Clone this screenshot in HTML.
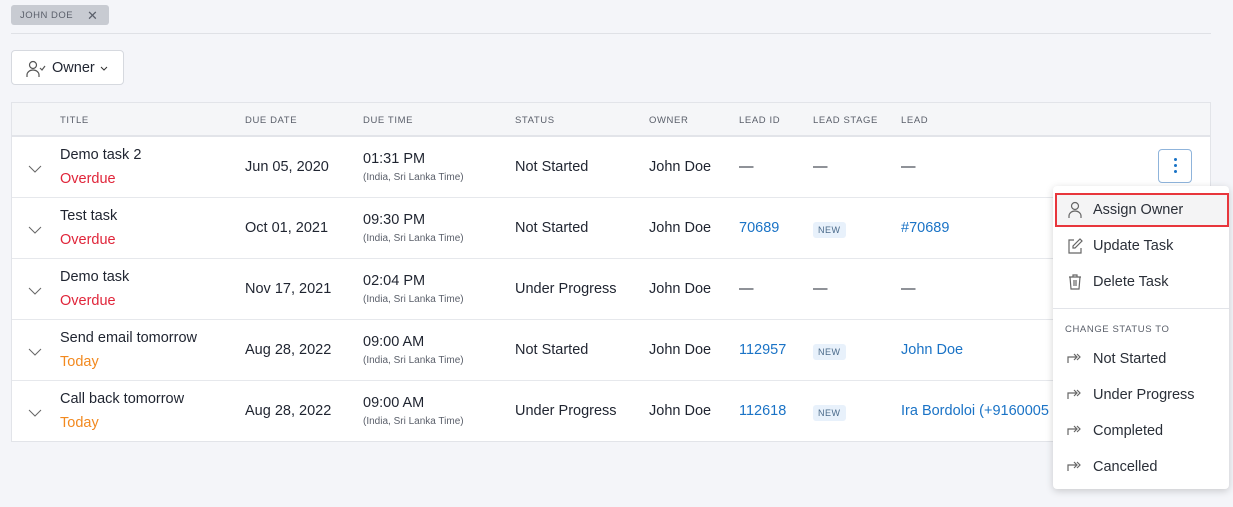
<!DOCTYPE html><html><head><style>
body{margin:0;width:1233px;height:507px;background:#f4f5f9;font-family:"Liberation Sans",sans-serif;position:relative;overflow:hidden;color:#1f2430}
.a{position:absolute;white-space:nowrap}
.chip{left:11px;top:5px;width:98px;height:20px;background:#c8cbd2;border-radius:3px;font-size:9.5px;color:#5a5f6a;letter-spacing:.5px;line-height:21px;padding-left:9px;box-sizing:border-box}
.hr{left:11px;top:33px;width:1200px;height:1px;background:#dfe1e6}
.btn{left:11px;top:50px;width:113px;height:35px;background:#fff;border:1px solid #d6d9df;border-radius:4px;box-sizing:border-box}
.tbl{left:11px;top:102px;width:1200px;height:340px;background:#fff;border:1px solid #e2e4e9;box-sizing:border-box}
.th{left:11px;top:102px;width:1200px;height:35px;background:#f5f6f8;border:1px solid #e2e4e9;border-bottom:2px solid #e2e4e9;box-sizing:border-box}
.h{top:115px;font-size:9.5px;letter-spacing:.6px;color:#5a5f6a}
.sep{left:12px;width:1198px;height:1px;background:#e6e8ec}
.t{font-size:14.5px}
.s{font-size:10px;color:#5a5f6a}
.od{color:#e0253a;font-size:14.5px}.td{color:#f2891f;font-size:14.5px}
.ln{color:#1a73c6;font-size:14.5px}
.new{font-size:9px;background:#e8f1fb;color:#4a6a8a;padding:3px 5px;border-radius:3px;letter-spacing:.5px}
.menu{left:1053px;top:186px;width:176px;height:303px;background:#fff;box-shadow:0 2px 8px rgba(0,0,0,.18);border-radius:4px}
.mi{font-size:14.5px;color:#2a2f38}
</style></head><body>
<div class="a chip">JOHN DOE<span style="position:absolute;left:76px;top:0;font-size:13px;font-weight:normal">✕</span></div>
<div class="a hr"></div>
<div class="a btn"><svg class="a" style="left:14px;top:9px" width="20" height="18" viewBox="0 0 20 18" fill="none" stroke="#555" stroke-width="1.2"><circle cx="7" cy="5" r="3.5"/><path d="M1 17v-2a6 5 0 0 1 12 0v2M14 8l2 2 3-4"/></svg><span class="a" style="left:40px;top:9px;font-size:14.5px">Owner</span><svg class="a" style="left:88px;top:15px" width="8" height="6"><path d="M1 1l3 3 3-3" stroke="#333" fill="none"/></svg></div>
<div class="a tbl"></div><div class="a th"></div>
<div class="a h" style="left:60px">TITLE</div><div class="a h" style="left:245px">DUE DATE</div><div class="a h" style="left:363px">DUE TIME</div><div class="a h" style="left:515px">STATUS</div><div class="a h" style="left:649px">OWNER</div><div class="a h" style="left:739px">LEAD ID</div><div class="a h" style="left:813px">LEAD STAGE</div><div class="a h" style="left:901px">LEAD</div>
<div class="a sep" style="top:197px"></div><div class="a sep" style="top:258px"></div><div class="a sep" style="top:319px"></div><div class="a sep" style="top:380px"></div>

<svg class="a" style="left:28px;top:165px" width="14" height="8"><path d="M1 1l6 6 6-6" stroke="#666" fill="none"/></svg>
<div class="a t" style="left:60px;top:147px">Demo task 2</div><div class="a od" style="left:60px;top:171px">Overdue</div>
<div class="a t" style="left:245px;top:159px">Jun 05, 2020</div><div class="a t" style="left:363px;top:151px">01:31 PM</div><div class="a s" style="left:363px;top:172px">(India, Sri Lanka Time)</div>
<div class="a t" style="left:515px;top:159px">Not Started</div><div class="a t" style="left:649px;top:159px">John Doe</div>
<div class="a t" style="left:739px;top:159px">—</div><div class="a t" style="left:813px;top:159px">—</div><div class="a t" style="left:901px;top:159px">—</div>
<div class="a" style="left:1158px;top:149px;width:34px;height:34px;border:1px solid #8fb4db;border-radius:4px;box-sizing:border-box"><span class="a" style="left:15px;top:8px;width:3px;height:3px;background:#1a73c6;border-radius:2px"></span><span class="a" style="left:15px;top:14px;width:3px;height:3px;background:#1a73c6;border-radius:2px"></span><span class="a" style="left:15px;top:20px;width:3px;height:3px;background:#1a73c6;border-radius:2px"></span></div>

<svg class="a" style="left:28px;top:226px" width="14" height="8"><path d="M1 1l6 6 6-6" stroke="#666" fill="none"/></svg>
<div class="a t" style="left:60px;top:208px">Test task</div><div class="a od" style="left:60px;top:232px">Overdue</div>
<div class="a t" style="left:245px;top:220px">Oct 01, 2021</div><div class="a t" style="left:363px;top:212px">09:30 PM</div><div class="a s" style="left:363px;top:233px">(India, Sri Lanka Time)</div>
<div class="a t" style="left:515px;top:220px">Not Started</div><div class="a t" style="left:649px;top:220px">John Doe</div>
<div class="a ln" style="left:739px;top:220px">70689</div><div class="a new" style="left:813px;top:222px">NEW</div><div class="a ln" style="left:901px;top:220px">#70689</div>

<svg class="a" style="left:28px;top:287px" width="14" height="8"><path d="M1 1l6 6 6-6" stroke="#666" fill="none"/></svg>
<div class="a t" style="left:60px;top:269px">Demo task</div><div class="a od" style="left:60px;top:293px">Overdue</div>
<div class="a t" style="left:245px;top:281px">Nov 17, 2021</div><div class="a t" style="left:363px;top:273px">02:04 PM</div><div class="a s" style="left:363px;top:294px">(India, Sri Lanka Time)</div>
<div class="a t" style="left:515px;top:281px">Under Progress</div><div class="a t" style="left:649px;top:281px">John Doe</div>
<div class="a t" style="left:739px;top:281px">—</div><div class="a t" style="left:813px;top:281px">—</div><div class="a t" style="left:901px;top:281px">—</div>

<svg class="a" style="left:28px;top:348px" width="14" height="8"><path d="M1 1l6 6 6-6" stroke="#666" fill="none"/></svg>
<div class="a t" style="left:60px;top:330px">Send email tomorrow</div><div class="a td" style="left:60px;top:354px">Today</div>
<div class="a t" style="left:245px;top:342px">Aug 28, 2022</div><div class="a t" style="left:363px;top:334px">09:00 AM</div><div class="a s" style="left:363px;top:355px">(India, Sri Lanka Time)</div>
<div class="a t" style="left:515px;top:342px">Not Started</div><div class="a t" style="left:649px;top:342px">John Doe</div>
<div class="a ln" style="left:739px;top:342px">112957</div><div class="a new" style="left:813px;top:344px">NEW</div><div class="a ln" style="left:901px;top:342px">John Doe</div>

<svg class="a" style="left:28px;top:409px" width="14" height="8"><path d="M1 1l6 6 6-6" stroke="#666" fill="none"/></svg>
<div class="a t" style="left:60px;top:391px">Call back tomorrow</div><div class="a td" style="left:60px;top:415px">Today</div>
<div class="a t" style="left:245px;top:403px">Aug 28, 2022</div><div class="a t" style="left:363px;top:395px">09:00 AM</div><div class="a s" style="left:363px;top:416px">(India, Sri Lanka Time)</div>
<div class="a t" style="left:515px;top:403px">Under Progress</div><div class="a t" style="left:649px;top:403px">John Doe</div>
<div class="a ln" style="left:739px;top:403px">112618</div><div class="a new" style="left:813px;top:405px">NEW</div><div class="a ln" style="left:901px;top:403px">Ira Bordoloi (+9160005</div>

<div class="a menu"></div>
<div class="a" style="left:1055px;top:193px;width:174px;height:34px;background:#f4f4f5;border:2px solid #e8363c;box-sizing:border-box"></div>
<svg class="a" style="left:1067px;top:201px" width="16" height="18" fill="none" stroke="#666" stroke-width="1.2"><circle cx="8" cy="5" r="3.5"/><path d="M2 17v-2a6 5 0 0 1 12 0v2"/></svg>
<div class="a mi" style="left:1093px;top:202px">Assign Owner</div>
<svg class="a" style="left:1067px;top:237px" width="16" height="18" fill="none" stroke="#666" stroke-width="1.2"><path d="M7 3H2v13h12v-5M8 11l-2 0 0-2 7-7 2 2z"/></svg>
<div class="a mi" style="left:1093px;top:238px">Update Task</div>
<svg class="a" style="left:1067px;top:273px" width="16" height="18" fill="none" stroke="#666" stroke-width="1.2"><path d="M2 4h12M6 4V2h4v2M3 4l1 12h8l1-12M7 7v6M9 7v6"/></svg>
<div class="a mi" style="left:1093px;top:274px">Delete Task</div>
<div class="a" style="left:1053px;top:308px;width:176px;height:1px;background:#e2e4e9"></div>
<div class="a" style="left:1065px;top:324px;font-size:9.5px;letter-spacing:.6px;color:#5a5f6a">CHANGE STATUS TO</div>
<svg class="a" style="left:1066px;top:350px" width="16" height="14" fill="none" stroke="#666" stroke-width="1.2"><path d="M2 13V7h8M8 4l3 3-3 3M11 4l3 3-3 3"/></svg><div class="a mi" style="left:1093px;top:351px">Not Started</div>
<svg class="a" style="left:1066px;top:386px" width="16" height="14" fill="none" stroke="#666" stroke-width="1.2"><path d="M2 13V7h8M8 4l3 3-3 3M11 4l3 3-3 3"/></svg><div class="a mi" style="left:1093px;top:387px">Under Progress</div>
<svg class="a" style="left:1066px;top:422px" width="16" height="14" fill="none" stroke="#666" stroke-width="1.2"><path d="M2 13V7h8M8 4l3 3-3 3M11 4l3 3-3 3"/></svg><div class="a mi" style="left:1093px;top:423px">Completed</div>
<svg class="a" style="left:1066px;top:458px" width="16" height="14" fill="none" stroke="#666" stroke-width="1.2"><path d="M2 13V7h8M8 4l3 3-3 3M11 4l3 3-3 3"/></svg><div class="a mi" style="left:1093px;top:459px">Cancelled</div>
</body></html>
